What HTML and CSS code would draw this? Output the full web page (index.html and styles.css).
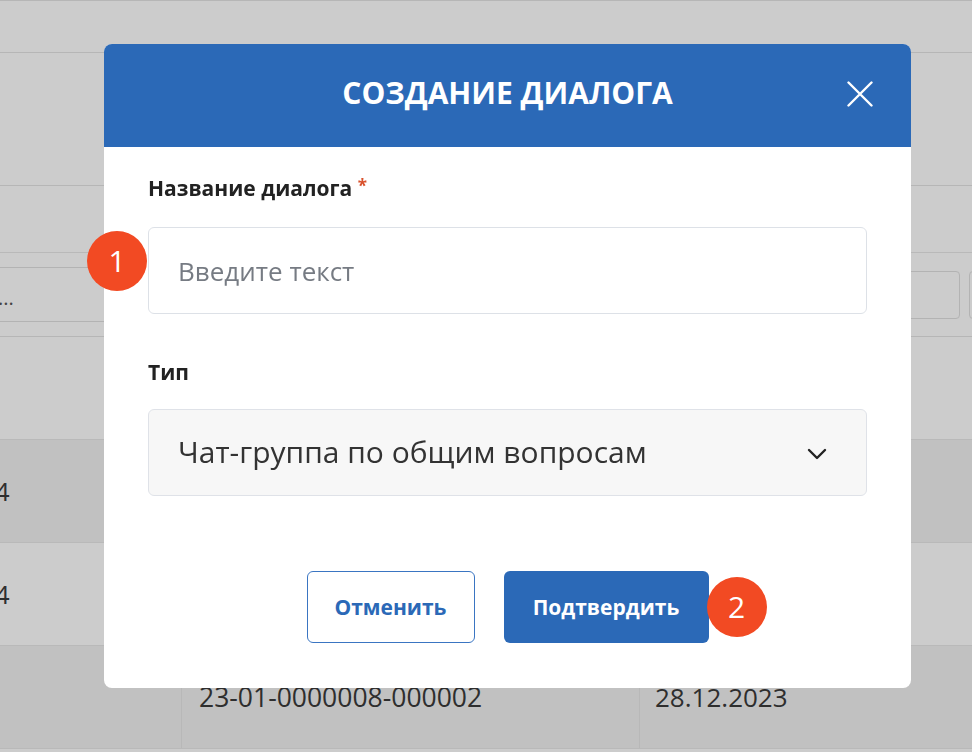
FILE: index.html
```html
<!DOCTYPE html>
<html lang="ru">
<head>
<meta charset="utf-8">
<title>Создание диалога</title>
<link rel="stylesheet" href="styles.css">
</head>
<body>
<div class="page">
  <div class="topbar"></div>
  <div class="toolbar"></div>
  <div class="table">
    <div class="row head-row">
      <div class="cell c1"></div><div class="cell c2"></div><div class="cell c3"></div>
    </div>
    <div class="row filter-row">
      <div class="filter f1">...</div>
      <div class="filter f2"></div>
      <div class="filter f3"></div>
      <div class="filter f4"></div>
    </div>
    <div class="row body-row">
      <div class="cell c1"></div><div class="cell c2"></div><div class="cell c3"></div>
    </div>
    <div class="row body-row alt">
      <div class="cell c1">10.01.2024</div><div class="cell c2">23-01-0000010-000001</div><div class="cell c3">10.01.2024</div>
    </div>
    <div class="row body-row">
      <div class="cell c1">09.01.2024</div><div class="cell c2">23-01-0000009-000003</div><div class="cell c3">09.01.2024</div>
    </div>
    <div class="row body-row alt">
      <div class="cell c1"></div><div class="cell c2">23-01-0000008-000002</div><div class="cell c3">28.12.2023</div>
    </div>
  </div>
</div>

<div class="backdrop"></div>

<div class="modal" role="dialog" aria-labelledby="modal-title">
  <div class="modal-header">
    <h2 class="modal-title" id="modal-title">СОЗДАНИЕ ДИАЛОГА</h2>
    <button class="close-btn" type="button" aria-label="Закрыть">
      <svg width="26" height="26" viewBox="0 0 26 26" fill="none" stroke="#ffffff" stroke-width="2.4" stroke-linecap="round"><path d="M1.5 1.5 L24.5 24.5 M24.5 1.5 L1.5 24.5"/></svg>
    </button>
  </div>
  <div class="modal-body">
    <div class="field field-name">
      <label class="field-label" for="dlg-name">Название диалога <span class="req">*</span></label>
      <div class="control-wrap">
        <span class="badge badge-1">1</span>
        <input class="text-input" id="dlg-name" type="text" placeholder="Введите текст">
      </div>
    </div>
    <div class="field field-type">
      <div class="field-label">Тип</div>
      <div class="select">
        <span class="select-value">Чат-группа по общим вопросам</span>
        <svg class="chevron" width="20" height="12" viewBox="0 0 20 12" fill="none" stroke="#222" stroke-width="2.4" stroke-linecap="round" stroke-linejoin="round"><path d="M2 2 L10 10 L18 2"/></svg>
      </div>
    </div>
    <div class="actions">
      <button class="btn btn-outline" type="button">Отменить</button>
      <div class="confirm-wrap">
        <button class="btn btn-primary" type="button">Подтвердить</button>
        <span class="badge badge-2">2</span>
      </div>
    </div>
  </div>
</div>
</body>
</html>
```
FILE: styles.css
```css
* { box-sizing: border-box; }

html, body {
  margin: 0;
  padding: 0;
  width: 972px;
  height: 752px;
  overflow: hidden;
  background: #ffffff;
  font-family: "Open Sans", "Noto Sans", sans-serif;
}

/* ---------- underlying page ---------- */
.page {
  width: 972px;
  height: 752px;
  overflow: hidden;
  background: #ffffff;
  color: #3a3a3a;
}

.topbar {
  height: 53px;
  border-top: 1px solid #e4e4e4;
  border-bottom: 1px solid #e4e4e4;
}

.toolbar {
  height: 133px;
  border-bottom: 1px solid #e4e4e4;
}

.table {
  margin-left: -141px;
  width: 1200px;
}

.row {
  display: flex;
  border-bottom: 1px solid #e8e8e8;
}

.head-row { height: 67px; }

.filter-row {
  height: 84px;
  align-items: center;
  gap: 9px;
  padding-left: 137px;
  border-bottom: 1px solid #e4e4e4;
}

.filter {
  flex: none;
  height: 48px;
  border: 1px solid #e0e0e0;
  border-radius: 4px;
  background: #ffffff;
  font-size: 20px;
  line-height: 46px;
  padding-left: 2px;
  color: #555;
}

.f1 { width: 300px; height: 55px; line-height: 60px; border-radius: 0; border-left: none; }
.f2 { width: 350px; }
.f3 { width: 296px; }
.f4 { width: 200px; }

.body-row { height: 103px; align-items: center; }
.body-row.alt { background: #f2f2f2; }

.cell {
  height: 100%;
  display: flex;
  align-items: center;
  font-size: 26px;
  color: #3a3a3a;
}

.c1 { width: 322px; padding-left: 18px; }
.c2 { width: 458px; padding-left: 17px; border-left: 1px solid #e6e6e6; font-size: 26.5px; }
.c3 { flex: 1; padding-left: 15px; border-left: 1px solid #e6e6e6; }

.head-row .cell { border-left: none; }

/* ---------- backdrop & modal ---------- */
.backdrop {
  position: fixed;
  inset: 0;
  background: rgba(0, 0, 0, 0.2);
}

.modal {
  position: fixed;
  left: 104px;
  top: 44px;
  width: 807px;
  height: 644px;
  background: #ffffff;
  border-radius: 8px;
  display: flex;
  flex-direction: column;
}

.modal-header {
  height: 103px;
  flex: none;
  background: #2b69b7;
  border-radius: 8px 8px 0 0;
  display: grid;
  grid-template-columns: 1fr auto 1fr;
  align-items: center;
}

.modal-title {
  grid-column: 2;
  margin: 0 0 6px;
  font-size: 30px;
  font-weight: 700;
  color: #ffffff;
}

.close-btn {
  grid-column: 3;
  justify-self: end;
  margin-right: 38px;
  margin-bottom: 3px;
  width: 26px;
  height: 26px;
  padding: 0;
  border: none;
  background: none;
  display: flex;
  cursor: pointer;
}

.modal-body {
  flex: 1;
  padding: 29px 44px 45px 44px;
  display: flex;
  flex-direction: column;
}

.field { display: flex; flex-direction: column; gap: 26px; }
.field-type { margin-top: 46px; gap: 24px; }

.field-label {
  font-size: 21px;
  line-height: 25px;
  font-weight: 700;
  color: #222222;
}

.req {
  color: #d9512c;
  font-size: 17px;
  line-height: 0;
  vertical-align: 4px;
}

.control-wrap { position: relative; }

.text-input {
  display: block;
  width: 100%;
  height: 87px;
  border: 1px solid #dde1e7;
  border-radius: 6px;
  background: #ffffff;
  padding: 0 0 0 29px;
  font-family: inherit;
  font-size: 26px;
  color: #333;
  outline: none;
}

.text-input::placeholder { color: #767b83; }

.select {
  height: 87px;
  border: 1px solid #dfe2e8;
  border-radius: 6px;
  background: #f7f7f7;
  display: flex;
  align-items: center;
  justify-content: space-between;
  padding: 0 39px 0 29px;
}

.select-value {
  font-size: 30px;
  line-height: 40px;
  margin-top: -2px;
  color: #333333;
}

.chevron { flex: none; margin-top: 2px; }

.actions {
  margin-top: auto;
  display: flex;
  justify-content: center;
  gap: 29px;
}

.btn {
  height: 72px;
  border-radius: 6px;
  font-family: "Open Sans", "Noto Sans", sans-serif;
  font-size: 21px;
  font-weight: 700;
  cursor: pointer;
}

.btn-outline {
  width: 168px;
  background: #ffffff;
  border: 1.5px solid #3a75c2;
  color: #2b69b7;
}

.btn-primary {
  width: 205px;
  background: #2b69b7;
  border: none;
  color: #ffffff;
}

.confirm-wrap { position: relative; display: flex; }

.badge {
  position: absolute;
  width: 60px;
  height: 60px;
  border-radius: 50%;
  background: #f24a23;
  color: #ffffff;
  font-size: 30px;
  line-height: 60px;
  text-align: center;
  font-weight: 400;
}

.badge-1 { left: -61px; top: 4px; }
.badge-2 { left: 203px; top: 6px; }
```
